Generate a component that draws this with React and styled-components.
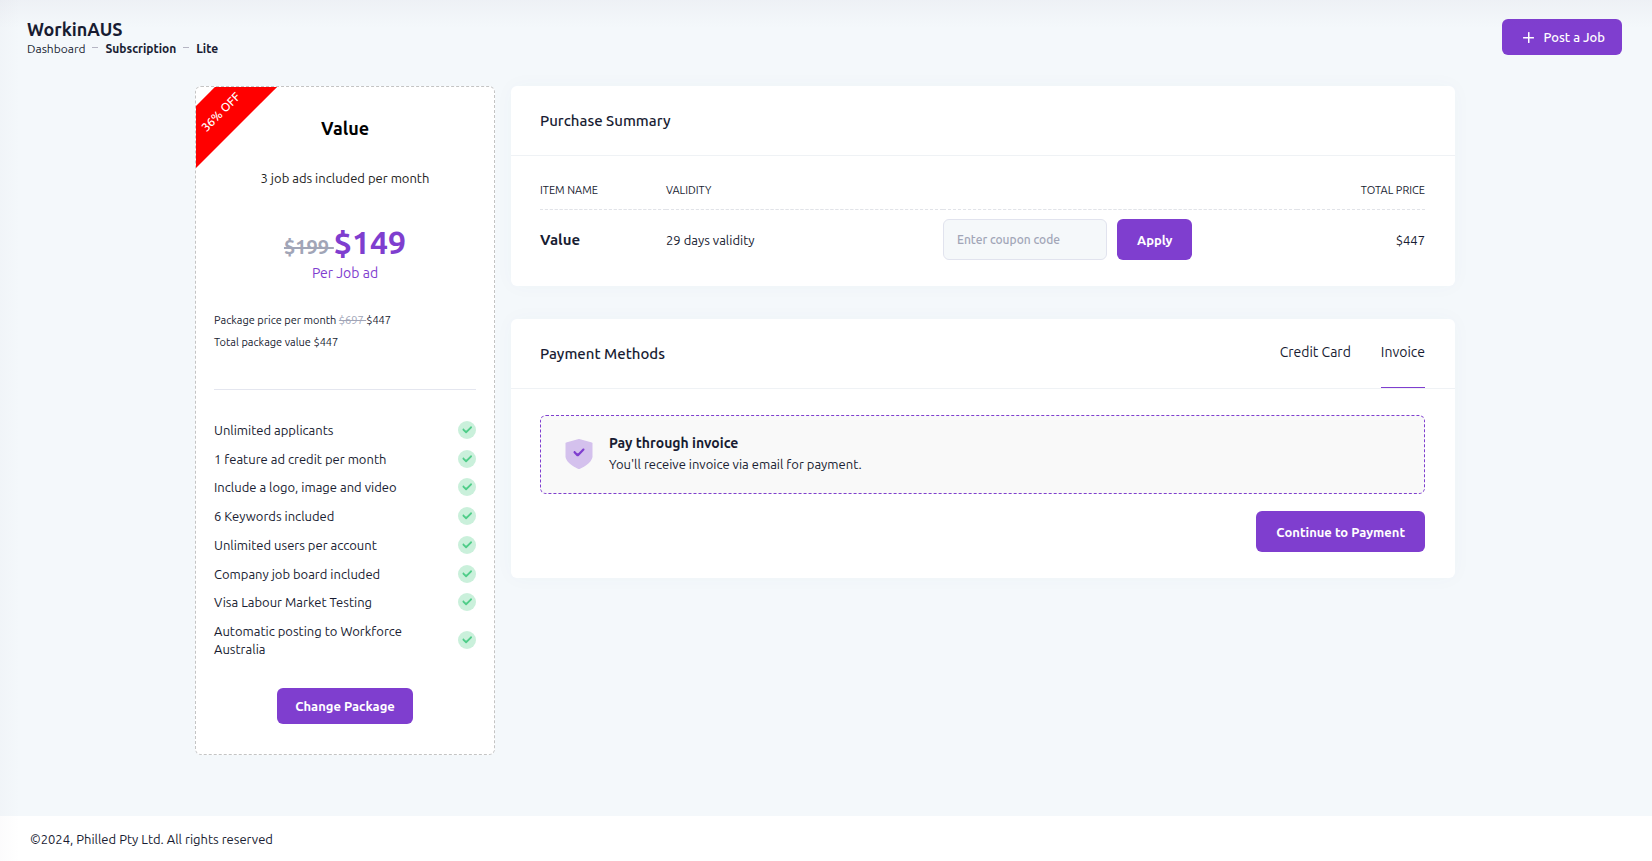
import React, { useState } from "react";
import styled, { createGlobalStyle } from "styled-components";

const GlobalStyle = createGlobalStyle`
  * {
    box-sizing: border-box;
  }
  body {
    margin: 0;
    background: #f4f8fb;
    color: #181c32;
    font-family: Ubuntu, "Noto Sans", sans-serif;
    font-size: 13px;
    line-height: 18px;
  }
  h1, h2, h3, p, ul {
    margin: 0;
    padding: 0;
  }
  button, input {
    font-family: inherit;
  }
`;

//page
const Page = styled.div`
  position: relative;
  min-height: 100vh;
  display: flex;
  flex-direction: column;
`;

const EdgeShade = styled.div`
  position: absolute;
  inset: 0;
  pointer-events: none;
  background:
    linear-gradient(180deg, rgba(82, 63, 105, 0.04), rgba(82, 63, 105, 0) 28px),
    linear-gradient(90deg, rgba(82, 63, 105, 0.02), rgba(82, 63, 105, 0) 20px);
`;

const Header = styled.header`
  display: flex;
  justify-content: space-between;
  align-items: center;
  height: 74px;
  padding: 0 30px 0 27px;
`;

const SiteTitle = styled.h1`
  padding-top: 2px;
  font-size: 18px;
  line-height: 22px;
  font-weight: 600;
`;

const Breadcrumb = styled.nav`
  display: flex;
  align-items: center;
  gap: 7px;
  font-size: 12px;
`;

const Crumb = styled.a`
  color: #181c32;
  font-weight: ${(props) => (props.$strong ? 700 : 400)};
  text-decoration: none;
`;

const Dash = styled.span`
  width: 6px;
  height: 1px;
  margin-bottom: 3px;
  background: #b5b5c3;
`;

const Button = styled.button`
  display: inline-flex;
  align-items: center;
  justify-content: center;
  gap: 9px;
  height: ${(props) => (props.$large ? 41 : 36)}px;
  padding: 0 ${(props) => (props.$large ? 20 : 18)}px;
  border: none;
  border-radius: 6px;
  background: #7f3ecf;
  color: #fff;
  font-size: 13px;
  font-weight: ${(props) => (props.$light ? 500 : 600)};
  cursor: pointer;
  &:hover {
    background: #6f32ba;
  }
`;

const PostButton = styled(Button)`
  padding: 0 17px 0 21px;
`;

const Content = styled.main`
  flex: 1;
  display: flex;
  align-items: flex-start;
  gap: 16px;
  width: 100%;
  max-width: 1262px;
  margin: 12px auto 0;
  padding: 0 2px 60px 0;
`;

//package card
const PackageCard = styled.section`
  position: relative;
  flex: 0 0 300px;
  display: flex;
  flex-direction: column;
  padding: 28px 18px 30px;
  border: 1px dashed #c4c4c4;
  border-radius: 6px;
  background: #fff;
`;

const RibbonClip = styled.div`
  position: absolute;
  inset: 0;
  overflow: hidden;
  pointer-events: none;
`;

const Ribbon = styled.div`
  position: absolute;
  top: 3px;
  left: -75px;
  width: 200px;
  height: 44px;
  transform: rotate(-45deg);
  background: #f00;
  color: #fff;
  font-size: 12px;
  font-weight: 500;
  line-height: 44px;
  text-align: center;
`;

const PackageName = styled.h2`
  color: #000;
  font-size: 18px;
  line-height: 26px;
  font-weight: 700;
  text-align: center;
`;

const PackageInfo = styled.p`
  margin-top: 27px;
  color: #222;
  line-height: 20px;
  text-align: center;
`;

const PriceLine = styled.div`
  margin-top: 36px;
  color: #7f3ecf;
  font-size: 32px;
  line-height: 36px;
  font-weight: 700;
  text-align: center;
`;

const OldPrice = styled.s`
  color: #a1a5b7;
  font-size: ${(props) => (props.$large ? 20 : 11)}px;
`;

const PriceUnit = styled.p`
  color: #7f3ecf;
  font-size: 14px;
  line-height: 16px;
  text-align: center;
`;

const PriceDetails = styled.div`
  margin-top: 28px;
  padding-bottom: 36px;
  border-bottom: 1px solid #e4e6ef;
  font-size: 11px;
  line-height: 22px;
`;

const FeatureList = styled.ul`
  display: flex;
  flex-direction: column;
  justify-content: space-between;
  min-height: 237px;
  margin-top: 31px;
  list-style: none;
`;

const Feature = styled.li`
  display: flex;
  align-items: center;
  justify-content: space-between;
  gap: 56px;
  svg {
    flex: none;
  }
`;

const PackageActions = styled.div`
  display: flex;
  justify-content: center;
  margin-top: 30px;
`;

//right side cards
const Panels = styled.div`
  flex: 1;
  min-width: 0;
  display: flex;
  flex-direction: column;
  gap: 33px;
`;

const Panel = styled.section`
  border-radius: 6px;
  background: #fff;
  box-shadow: 0 0 20px rgba(76, 87, 125, 0.03);
`;

const PanelHeader = styled.div`
  display: flex;
  justify-content: space-between;
  height: 70px;
  padding: 0 30px 0 29px;
  border-bottom: 1px solid #eff2f5;
`;

const PanelTitle = styled.h2`
  align-self: center;
  font-size: 15px;
  line-height: 20px;
  font-weight: 500;
`;

const PanelBody = styled.div`
  padding: ${(props) => (props.$table ? 20 : 26)}px 30px 26px 29px;
`;

const SummaryTable = styled.table`
  width: 100%;
  border-collapse: collapse;
  table-layout: fixed;
  th {
    padding: 5px 0 10px;
    border-bottom: 1px dashed #e1e3e8;
    font-size: 11px;
    font-weight: 400;
    text-align: left;
    text-transform: uppercase;
  }
  td {
    padding: 9px 0 0;
  }
  th:last-child,
  td:last-child {
    text-align: right;
  }
`;

const Column = styled.col`
  width: ${(props) => props.$width};
`;

const ItemName = styled.span`
  font-size: 15px;
  font-weight: 700;
`;

const CouponForm = styled.form`
  display: flex;
  gap: 10px;
`;

const CouponInput = styled.input`
  width: 164px;
  height: 41px;
  padding: 0 13px;
  border: 1px solid #e1e3ee;
  border-radius: 6px;
  background: #f5f8fa;
  color: #181c32;
  font-size: 12px;
  font-weight: 500;
  &::placeholder {
    color: #a1a5b7;
  }
`;

const Tabs = styled.div`
  display: flex;
  gap: 30px;
`;

const Tab = styled.button`
  padding: 0 0 3px;
  border: none;
  border-bottom: 1px solid ${(props) => (props.$active ? "#7f3ecf" : "transparent")};
  background: none;
  color: #181c32;
  font-size: 14px;
  cursor: pointer;
`;

const Notice = styled.div`
  display: flex;
  align-items: center;
  gap: 12px;
  padding: 16px 20px 18px;
  border: 1px dashed #7f3ecf;
  border-radius: 6px;
  background: #f9f9f9;
`;

const NoticeTitle = styled.h3`
  font-size: 14px;
  line-height: 22px;
  font-weight: 600;
`;

const NoticeText = styled.p`
  line-height: 21px;
`;

const PanelActions = styled.div`
  display: flex;
  justify-content: flex-end;
  margin-top: 17px;
`;

const Footer = styled.footer`
  padding: 14px 30px 13px;
  background: #fff;
`;

const features = [
  "Unlimited applicants",
  "1 feature ad credit per month",
  "Include a logo, image and video",
  "6 Keywords included",
  "Unlimited users per account",
  "Company job board included",
  "Visa Labour Market Testing",
  "Automatic posting to Workforce Australia",
];

const methods = ["Credit Card", "Invoice"];

const PlusIcon = () => (
  <svg width="11" height="11" viewBox="0 0 11 11" fill="#fff">
    <rect y="5" width="11" height="1.5" rx="0.5" />
    <rect x="5" width="1.5" height="11" rx="0.5" />
  </svg>
);

const CheckIcon = () => (
  <svg width="18" height="18" viewBox="2 2 20 20" fill="#50cd89">
    <circle opacity="0.3" cx="12" cy="12" r="10" />
    <path d="M10.4343 12.4343L8.75 10.75C8.33579 10.3358 7.66421 10.3358 7.25 10.75C6.83579 11.1642 6.83579 11.8358 7.25 12.25L10.2929 15.2929C10.6834 15.6834 11.3166 15.6834 11.7071 15.2929L17.25 9.75C17.6642 9.33579 17.6642 8.66421 17.25 8.25C16.8358 7.83579 16.1642 7.83579 15.75 8.25L11.5657 12.4343C11.2533 12.7467 10.7467 12.7467 10.4343 12.4343Z" />
  </svg>
);

const ShieldIcon = () => (
  <svg width="36" height="36" viewBox="0 0 24 24" fill="#7f3ecf">
    <path
      opacity="0.3"
      d="M20.5543 4.37824L12.1798 2.02473C12.0626 1.99176 11.9376 1.99176 11.8203 2.02473L3.44572 4.37824C3.18118 4.45258 3 4.6807 3 4.93945V13.569C3 14.6914 3.48509 15.8404 4.4417 16.984C5.17231 17.8575 6.18314 18.7345 7.446 19.5909C9.56752 21.0295 11.6566 21.912 11.7445 21.9488C11.8258 21.9829 11.9129 22 12.0001 22C12.0872 22 12.1744 21.983 12.2557 21.9488C12.3435 21.912 14.4326 21.0295 16.5541 19.5909C17.8169 18.7345 18.8277 17.8575 19.5584 16.984C20.515 15.8404 21 14.6914 21 13.569V4.93945C21 4.6807 20.8189 4.45258 20.5543 4.37824Z"
    />
    <path d="M10.5606 11.3042L9.57283 10.3018C9.28174 10.0065 8.80522 10.0065 8.51412 10.3018C8.22897 10.5912 8.22897 11.0559 8.51412 11.3452L10.4182 13.2773C10.8099 13.6747 11.451 13.6747 11.8427 13.2773L15.4859 9.58051C15.771 9.29117 15.771 8.82648 15.4859 8.53714C15.1948 8.24176 14.7183 8.24176 14.4272 8.53714L11.7002 11.3042C11.3869 11.6221 10.874 11.6221 10.5606 11.3042Z" />
  </svg>
);

export default function App() {
  const [method, setMethod] = useState("Invoice");
  const [coupon, setCoupon] = useState("");

  return (
    <>
      <GlobalStyle />
      <Page>
        <Header>
          <div>
            <SiteTitle>WorkinAUS</SiteTitle>
            <Breadcrumb aria-label="Breadcrumb">
              <Crumb href="#dashboard">Dashboard</Crumb>
              <Dash />
              <Crumb href="#subscription" $strong>
                Subscription
              </Crumb>
              <Dash />
              <Crumb href="#lite" $strong>
                Lite
              </Crumb>
            </Breadcrumb>
          </div>
          <PostButton type="button" $light>
            <PlusIcon />
            Post a Job
          </PostButton>
        </Header>

        <Content>
          <PackageCard>
            <RibbonClip>
              <Ribbon>36% OFF</Ribbon>
            </RibbonClip>
            <PackageName>Value</PackageName>
            <PackageInfo>3 job ads included per month</PackageInfo>
            <PriceLine>
              <OldPrice $large>$199 </OldPrice>$149
            </PriceLine>
            <PriceUnit>Per Job ad</PriceUnit>
            <PriceDetails>
              <p>
                Package price per month <OldPrice>$697 </OldPrice>$447
              </p>
              <p>Total package value $447</p>
            </PriceDetails>
            <FeatureList>
              {features.map((feature) => (
                <Feature key={feature}>
                  {feature}
                  <CheckIcon />
                </Feature>
              ))}
            </FeatureList>
            <PackageActions>
              <Button type="button">Change Package</Button>
            </PackageActions>
          </PackageCard>

          <Panels>
            <Panel>
              <PanelHeader>
                <PanelTitle>Purchase Summary</PanelTitle>
              </PanelHeader>
              <PanelBody $table>
                <SummaryTable>
                  <colgroup>
                    <Column $width="126px" />
                    <Column />
                    <Column $width="40%" />
                    <Column $width="128px" />
                  </colgroup>
                  <thead>
                    <tr>
                      <th>Item name</th>
                      <th>Validity</th>
                      <th aria-label="Coupon" />
                      <th>Total price</th>
                    </tr>
                  </thead>
                  <tbody>
                    <tr>
                      <td>
                        <ItemName>Value</ItemName>
                      </td>
                      <td>29 days validity</td>
                      <td>
                        <CouponForm onSubmit={(e) => e.preventDefault()}>
                          <CouponInput
                            aria-label="Coupon code"
                            placeholder="Enter coupon code"
                            value={coupon}
                            onChange={(e) => setCoupon(e.target.value)}
                          />
                          <Button $large>Apply</Button>
                        </CouponForm>
                      </td>
                      <td>$447</td>
                    </tr>
                  </tbody>
                </SummaryTable>
              </PanelBody>
            </Panel>

            <Panel>
              <PanelHeader>
                <PanelTitle>Payment Methods</PanelTitle>
                <Tabs role="tablist">
                  {methods.map((name) => (
                    <Tab
                      key={name}
                      type="button"
                      role="tab"
                      aria-selected={method === name}
                      $active={method === name}
                      onClick={() => setMethod(name)}
                    >
                      {name}
                    </Tab>
                  ))}
                </Tabs>
              </PanelHeader>
              <PanelBody>
                <Notice>
                  <ShieldIcon />
                  <div>
                    <NoticeTitle>Pay through invoice</NoticeTitle>
                    <NoticeText>You'll receive invoice via email for payment.</NoticeText>
                  </div>
                </Notice>
                <PanelActions>
                  <Button type="button" $large>
                    Continue to Payment
                  </Button>
                </PanelActions>
              </PanelBody>
            </Panel>
          </Panels>
        </Content>

        <Footer>©2024, Philled Pty Ltd. All rights reserved</Footer>
        <EdgeShade />
      </Page>
    </>
  );
}
